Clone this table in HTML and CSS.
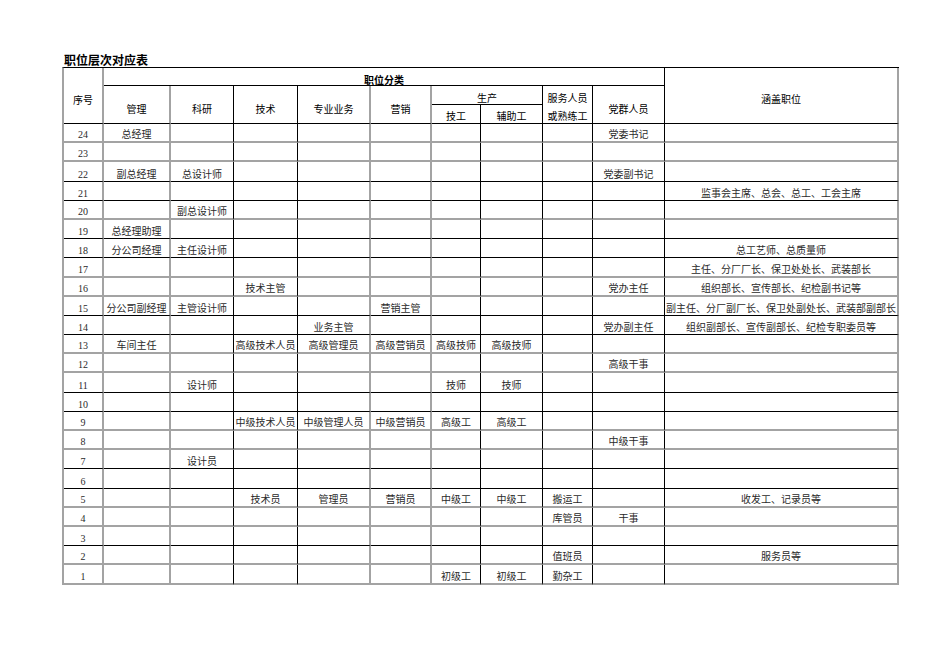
FILE: index.html
```html
<!DOCTYPE html>
<html lang="zh">
<head>
<meta charset="utf-8">
<title>职位层次对应表</title>
<link rel="stylesheet" href="styles.css">
</head>
<body>
<div class="page">
  <h1 class="title">职位层次对应表</h1>
  <table class="grid">
    <colgroup>
      <col class="c-no"><col class="c-mgmt"><col class="c-rd"><col class="c-tech"><col class="c-biz"><col class="c-sale"><col class="c-skill"><col class="c-aux"><col class="c-serv"><col class="c-party"><col class="c-cover">
    </colgroup>
    <thead>
      <tr class="h1">
        <th rowspan="3" class="hd-no gr">序号</th>
        <th colspan="9" class="hd-cat">职位分类</th>
        <th rowspan="3" class="hd-cover gr">涵盖职位</th>
      </tr>
      <tr class="h2">
        <th rowspan="2" class="hd-main gr">管理</th>
        <th rowspan="2" class="hd-main">科研</th>
        <th rowspan="2" class="hd-main">技术</th>
        <th rowspan="2" class="hd-main gr">专业业务</th>
        <th rowspan="2" class="hd-main gr">营销</th>
        <th colspan="2" class="hd-prod">生产</th>
        <th rowspan="2" class="hd-serv"><div class="l1">服务人员</div><div class="l2">或熟练工</div></th>
        <th rowspan="2" class="hd-main">党群人员</th>
      </tr>
      <tr class="h3">
        <th class="hd-sub">技工</th>
        <th class="hd-sub">辅助工</th>
      </tr>
    </thead>
    <tbody>
      <tr class="g"><td>24</td><td>总经理</td><td></td><td></td><td></td><td></td><td></td><td></td><td></td><td>党委书记</td><td></td></tr>
      <tr class="g"><td>23</td><td></td><td></td><td></td><td></td><td></td><td></td><td></td><td></td><td></td><td></td></tr>
      <tr><td>22</td><td>副总经理</td><td>总设计师</td><td></td><td></td><td></td><td></td><td></td><td></td><td>党委副书记</td><td></td></tr>
      <tr><td>21</td><td></td><td></td><td></td><td></td><td></td><td></td><td></td><td></td><td></td><td>监事会主席、总会、总工、工会主席</td></tr>
      <tr class="g"><td>20</td><td></td><td>副总设计师</td><td></td><td></td><td></td><td></td><td></td><td></td><td></td><td></td></tr>
      <tr><td>19</td><td>总经理助理</td><td></td><td></td><td></td><td></td><td></td><td></td><td></td><td></td><td></td></tr>
      <tr><td>18</td><td>分公司经理</td><td>主任设计师</td><td></td><td></td><td></td><td></td><td></td><td></td><td></td><td>总工艺师、总质量师</td></tr>
      <tr class="g"><td>17</td><td></td><td></td><td></td><td></td><td></td><td></td><td></td><td></td><td></td><td>主任、分厂厂长、保卫处处长、武装部长</td></tr>
      <tr class="g"><td>16</td><td></td><td></td><td>技术主管</td><td></td><td></td><td></td><td></td><td></td><td>党办主任</td><td>组织部长、宣传部长、纪检副书记等</td></tr>
      <tr><td>15</td><td>分公司副经理</td><td>主管设计师</td><td></td><td></td><td>营销主管</td><td></td><td></td><td></td><td></td><td>副主任、分厂副厂长、保卫处副处长、武装部副部长</td></tr>
      <tr><td>14</td><td></td><td></td><td></td><td>业务主管</td><td></td><td></td><td></td><td></td><td>党办副主任</td><td>组织副部长、宣传副部长、纪检专职委员等</td></tr>
      <tr class="g"><td>13</td><td>车间主任</td><td></td><td>高级技术人员</td><td>高级管理员</td><td>高级营销员</td><td>高级技师</td><td>高级技师</td><td></td><td></td><td></td></tr>
      <tr class="g"><td>12</td><td></td><td></td><td></td><td></td><td></td><td></td><td></td><td></td><td>高级干事</td><td></td></tr>
      <tr><td>11</td><td></td><td>设计师</td><td></td><td></td><td></td><td>技师</td><td>技师</td><td></td><td></td><td></td></tr>
      <tr><td>10</td><td></td><td></td><td></td><td></td><td></td><td></td><td></td><td></td><td></td><td></td></tr>
      <tr class="g"><td>9</td><td></td><td></td><td>中级技术人员</td><td>中级管理人员</td><td>中级营销员</td><td>高级工</td><td>高级工</td><td></td><td></td><td></td></tr>
      <tr class="g"><td>8</td><td></td><td></td><td></td><td></td><td></td><td></td><td></td><td></td><td>中级干事</td><td></td></tr>
      <tr><td>7</td><td></td><td>设计员</td><td></td><td></td><td></td><td></td><td></td><td></td><td></td><td></td></tr>
      <tr><td>6</td><td></td><td></td><td></td><td></td><td></td><td></td><td></td><td></td><td></td><td></td></tr>
      <tr class="g"><td>5</td><td></td><td></td><td>技术员</td><td>管理员</td><td>营销员</td><td>中级工</td><td>中级工</td><td>搬运工</td><td></td><td>收发工、记录员等</td></tr>
      <tr class="g"><td>4</td><td></td><td></td><td></td><td></td><td></td><td></td><td></td><td>库管员</td><td>干事</td><td></td></tr>
      <tr><td>3</td><td></td><td></td><td></td><td></td><td></td><td></td><td></td><td></td><td></td><td></td></tr>
      <tr class="g"><td>2</td><td></td><td></td><td></td><td></td><td></td><td></td><td></td><td>值班员</td><td></td><td>服务员等</td></tr>
      <tr class="g"><td>1</td><td></td><td></td><td></td><td></td><td></td><td>初级工</td><td>初级工</td><td>勤杂工</td><td></td><td></td></tr>
    </tbody>
  </table>
</div>
</body>
</html>
```

FILE: styles.css
```css
html, body {
  margin: 0;
  padding: 0;
  background: #ffffff;
}

.page {
  padding: 53px 0 0 62px;
}

.title {
  margin: 0;
  padding-left: 2px;
  font-family: "Noto Sans CJK SC", sans-serif;
  font-size: 12px;
  line-height: 14px;
  font-weight: bold;
  color: #000;
}

.grid {
  border-collapse: separate;
  border-spacing: 0;
  table-layout: fixed;
  width: 837px;
  border-top: 1px solid #000;
  border-left: 2px solid #a3a3a3;
}

.c-no { width: 40px; }
.c-mgmt { width: 67px; }
.c-rd { width: 63px; }
.c-tech { width: 64px; }
.c-biz { width: 73px; }
.c-sale { width: 61px; }
.c-skill { width: 49px; }
.c-aux { width: 62px; }
.c-serv { width: 50px; }
.c-party { width: 72px; }
.c-cover { width: 234px; }

.grid th,
.grid td {
  box-sizing: border-box;
  padding: 0;
  border-right: 1px solid #000;
  border-bottom: 1px solid #000;
  text-align: center;
  white-space: nowrap;
  overflow: visible;
}

/* header */
.grid th {
  font-family: "Noto Sans CJK SC", sans-serif;
  font-size: 10px;
  font-weight: normal;
  color: #000;
  vertical-align: top;
  line-height: 14px;
}

.h1 { height: 18px; }
.h2 { height: 19px; }
.h3 { height: 19px; }

.grid th.gr { border-right: 2px solid #a3a3a3; }

.grid th.hd-no { padding-top: 25px; }
.grid th.hd-cover { padding-top: 24px; }
.grid th.hd-cat {
  font-weight: bold;
  line-height: 11px;
  padding-top: 6px;
}
.grid th.hd-main { padding-top: 16px; }
.grid th.hd-prod {
  line-height: 12px;
  padding-top: 6px;
}
.grid th.hd-sub {
  line-height: 12px;
  padding-top: 5px;
}
.hd-serv .l1 {
  line-height: 12px;
  padding-top: 6px;
}
.hd-serv .l2 {
  line-height: 12px;
  padding-top: 6px;
}

/* body */
.grid tbody tr { height: 19.2px; }

.grid td {
  font-family: "Liberation Serif", "Noto Sans CJK SC", serif;
  font-size: 10px;
  line-height: 12px;
  color: #2a2a2a;
  vertical-align: bottom;
}

.grid td:nth-child(1),
.grid td:nth-child(2),
.grid td:nth-child(5),
.grid td:nth-child(6),
.grid td:nth-child(11) {
  border-right: 2px solid #a3a3a3;
}

.grid tr.g td {
  border-bottom: 2px solid #a3a3a3;
}
```
